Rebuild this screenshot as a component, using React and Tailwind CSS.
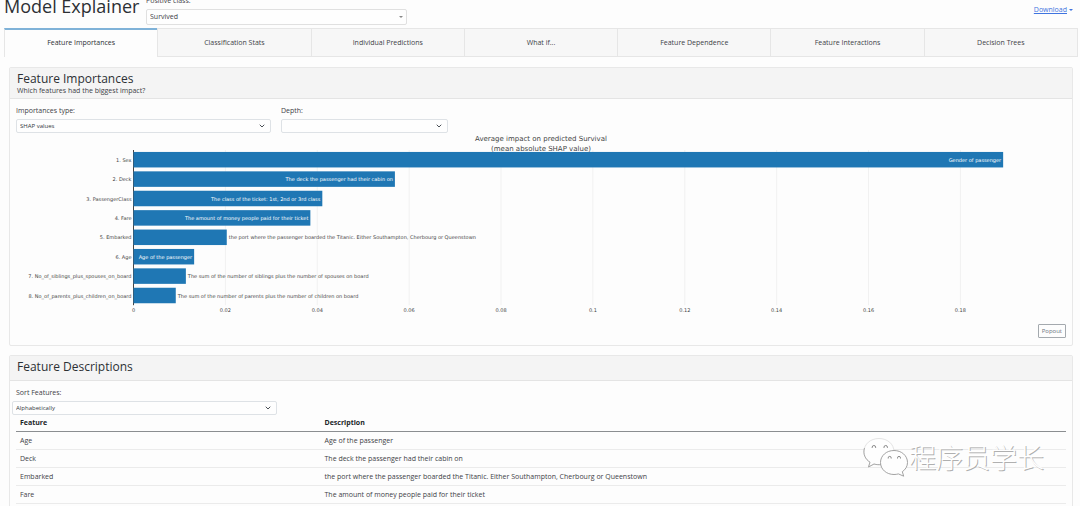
import React, { useState } from "react";
import { ChevronDown } from "lucide-react";

const TABS = [
  "Feature Importances",
  "Classification Stats",
  "Individual Predictions",
  "What if...",
  "Feature Dependence",
  "Feature Interactions",
  "Decision Trees",
];

const IMPORTANCES = [
  { name: "Sex", value: 0.1893, text: "Gender of passenger", inside: true },
  { name: "Deck", value: 0.0569, text: "The deck the passenger had their cabin on", inside: true },
  { name: "PassengerClass", value: 0.0411, text: "The class of the ticket: 1st, 2nd or 3rd class", inside: true },
  { name: "Fare", value: 0.0385, text: "The amount of money people paid for their ticket", inside: true },
  {
    name: "Embarked",
    value: 0.0203,
    text: "the port where the passenger boarded the Titanic. Either Southampton, Cherbourg or Queenstown",
  },
  { name: "Age", value: 0.0132, text: "Age of the passenger", inside: true },
  {
    name: "No_of_siblings_plus_spouses_on_board",
    value: 0.0114,
    text: "The sum of the number of siblings plus the number of spouses on board",
  },
  {
    name: "No_of_parents_plus_children_on_board",
    value: 0.0092,
    text: "The sum of the number of parents plus the number of children on board",
  },
];

const DESCRIPTIONS = [
  ["Age", "Age of the passenger"],
  ["Deck", "The deck the passenger had their cabin on"],
  ["Embarked", "the port where the passenger boarded the Titanic. Either Southampton, Cherbourg or Queenstown"],
  ["Fare", "The amount of money people paid for their ticket"],
];

const TICKS = [0, 0.02, 0.04, 0.06, 0.08, 0.1, 0.12, 0.14, 0.16, 0.18];

// plot geometry, in viewBox units
const LEFT = 117.5;
const TOP = 17;
const ROW = 19.4;
const BAR = 15.5;
const SCALE = 4594;
const BOTTOM = TOP + ROW * IMPORTANCES.length;

const SelectBox = ({ id, options, className }) => (
  <div className={`relative ${className}`}>
    <select
      id={id}
      className="block h-[14px] w-full appearance-none rounded-xs border border-[#dee2e6] bg-[#fefefe] px-[3px] text-[6px] leading-3 text-[#33383d]"
    >
      {options.map((o) => (
        <option key={o}>{o}</option>
      ))}
    </select>
    <ChevronDown className="pointer-events-none absolute top-[3px] right-[5px] h-2 w-2 text-[#4a5056]" strokeWidth={3} />
  </div>
);

const Card = ({ title, subtitle, children }) => (
  <section className="rounded-xs border border-[#e8e8e8]">
    <header className={`border-b border-[#e4e4e4] bg-[#f4f4f4] px-[7px] pt-[3px] ${subtitle ? "pb-[3px]" : "pb-[6px]"}`}>
      <h2 className="text-[12px] leading-[15px] text-[#2c3034]">{title}</h2>
      {subtitle && <p className="text-[7px] leading-[9px] text-[#3d4247]">{subtitle}</p>}
    </header>
    {children}
  </section>
);

const ImportanceChart = () => (
  <svg viewBox="0 0 1050 186" className="block w-full" fontFamily="'DejaVu Sans', Verdana, sans-serif" role="img" aria-label="Average impact on predicted Survival">
    {TICKS.map((t) => (
      <g key={t}>
        <line
          x1={LEFT + t * SCALE}
          x2={LEFT + t * SCALE}
          y1={TOP}
          y2={BOTTOM}
          stroke={t === 0 ? "#444" : "#f1f1f1"}
          strokeWidth={1}
        />
        <text x={LEFT + t * SCALE} y={BOTTOM + 7} fontSize={5} textAnchor="middle" fill="#444">
          {t}
        </text>
      </g>
    ))}
    {IMPORTANCES.map((f, i) => {
      const mid = TOP + ROW * (i + 0.5);
      const end = LEFT + f.value * SCALE;
      return (
        <g key={f.name} fontSize={5}>
          <rect x={LEFT} y={mid - BAR / 2} width={f.value * SCALE} height={BAR} fill="#1f77b4" />
          <text x={LEFT - 2} y={mid + 2} textAnchor="end" fill="#444">
            {`${i + 1}. ${f.name}`}
          </text>
          <text
            x={f.inside ? end - 2 : end + 2}
            y={mid + 2}
            textAnchor={f.inside ? "end" : "start"}
            fill={f.inside ? "#fff" : "#444"}
          >
            {f.text}
          </text>
        </g>
      );
    })}
    <g fontSize={7} textAnchor="middle" fill="#444">
      <text x={525} y={8}>Average impact on predicted Survival</text>
      <text x={525} y={17.5}>(mean absolute SHAP value)</text>
    </g>
  </svg>
);

const Watermark = () => (
  <div className="pointer-events-none absolute top-[437px] right-[36px] flex items-center">
    <svg viewBox="0 0 46 40" className="h-10 w-[46px]" fill="#fefefe" strokeLinejoin="round">
      <path
        d="M16 1.5C7.600 1.500 1 7 1 14.500c0 4.500 2.200 8.200 6 10.700L5.500 30l5.500-3c1.600.5 3.200.7 5 .7 8.300 0 15-5.500 15-13C31 7 24.300 1.500 16 1.500Z"
        stroke="#dcdcdc"
        strokeWidth="0.8"
      />
      <path d="M1.500 11C-.5 17 2.500 22.500 7 25.200L5.500 30l5.500-3c2.500.8 5 .8 7.500.5" fill="none" stroke="#999" strokeWidth="0.8" />
      <path
        d="M31 13.500c-7.600 0-13.500 5.200-13.500 12S23.400 37.500 31 37.500c1.600 0 3-.2 4.400-.6l5.300 2.300-1.400-4.500c3.300-2.200 5.200-5.400 5.200-9.200 0-6.800-5.900-12-13.500-12Z"
        stroke="#999"
        strokeWidth="0.9"
      />
      <g fill="none" stroke="#888" strokeWidth="1">
        <path d="M9.200 11v-.8a1.700 1.700 0 0 1 3.400 0v.8M21 11v-.8a1.700 1.700 0 0 1 3.400 0v.8" />
        <path d="M25.200 21.500v-.6a1.500 1.500 0 0 1 3 0v.6M34.500 21.500v-.6a1.500 1.500 0 0 1 3 0v.6" />
      </g>
    </svg>
    <span className="font-['Noto_Sans_CJK_SC',sans-serif] text-[27px] leading-10 font-light text-white [text-shadow:1px_1px_0_#b0b0b0]">
      程序员学长
    </span>
  </div>
);

export default function App() {
  const [active, setActive] = useState(TABS[0]);

  return (
    <div className="relative h-screen overflow-hidden bg-[#fdfdfd] font-['Open_Sans','Noto_Sans',sans-serif] text-[7px] text-[#3d4247]">
      <div className="-mt-[6px] flex items-start pr-[7px] pl-1">
        <h1 className="w-[142px] text-[18px] leading-6 whitespace-nowrap text-[#2c3034]">Model Explainer</h1>
        <div className="w-[261px]">
          <label htmlFor="positive-class" className="block pt-[2px] leading-[10px]">
            Positive class:
          </label>
          <div className="relative mt-[3px]">
            <select
              id="positive-class"
              className="block h-4 w-full appearance-none rounded-xs border border-[#e0e0e0] bg-[#fefefe] px-[3px] text-[7px] leading-3"
            >
              <option>Survived</option>
              <option>Not survived</option>
            </select>
            <svg viewBox="0 0 4 2" className="pointer-events-none absolute top-[7px] right-1 h-[2px] w-1" fill="#888">
              <path d="M0 0h4L2 2Z" />
            </svg>
          </div>
        </div>
        <a href="#download" className="mt-[11px] ml-auto flex items-center gap-[2px] leading-[10px] text-[#3f74e0]">
          <span className="underline">Download</span>
          <svg viewBox="0 0 4 2" className="h-[2px] w-1" fill="currentColor">
            <path d="M0 0h4L2 2Z" />
          </svg>
        </a>
      </div>

      <nav className="mt-[3px] mr-[2px] ml-1 flex h-[29px] border-r border-[#e6e6e6]" role="tablist">
        {TABS.map((tab) => (
          <button
            key={tab}
            role="tab"
            aria-selected={active === tab}
            onClick={() => setActive(tab)}
            className={
              active === tab
                ? "flex-1 border-t-2 border-l border-t-[#7fb2d8] border-l-[#e6e6e6] bg-[#fdfdfd] text-[#2c3034]"
                : "flex-1 border-t border-b border-l border-[#e6e6e6] bg-[#f7f7f7] pt-[2px]"
            }
          >
            {tab}
          </button>
        ))}
      </nav>

      <main className="flex flex-col gap-[9px] pt-[10px] pr-[7px] pl-[9px]">
        <Card title="Feature Importances" subtitle="Which features had the biggest impact?">
          <div className="px-[6px] pt-[7px] pb-[7px]">
            <div className="flex gap-[10px]">
              <div className="w-[255px]">
                <label htmlFor="importance-type" className="mb-[3px] block leading-[10px]">
                  Importances type:
                </label>
                <SelectBox id="importance-type" options={["SHAP values", "Permutation Importances"]} className="w-full" />
              </div>
              <div className="w-[167px]">
                <label htmlFor="depth" className="mb-[3px] block leading-[10px]">
                  Depth:
                </label>
                <SelectBox id="depth" options={["", "1", "2", "3", "4", "5", "6", "7", "8"]} className="w-full" />
              </div>
            </div>
            <ImportanceChart />
            <div className="mt-[5px] flex justify-end">
              <button className="h-[14px] rounded-[1px] border border-[#a4a9ae] px-[3px] text-[6px] leading-3 text-[#6c757d]">
                Popout
              </button>
            </div>
          </div>
        </Card>

        <Card title="Feature Descriptions">
          <div className="px-[6px] pt-[7px] pb-10">
            <label htmlFor="sort-features" className="mb-[3px] block leading-[10px]">
              Sort Features:
            </label>
            <SelectBox id="sort-features" options={["Alphabetically", "Importance"]} className="-ml-1 w-[265px]" />
            <table className="w-full text-left leading-[17px]">
              <thead>
                <tr className="border-b border-[#8b8e91] text-[#212529] leading-4">
                  <th className="w-[29%] px-1 font-bold">Feature</th>
                  <th className="px-1 font-bold">Description</th>
                </tr>
              </thead>
              <tbody>
                {DESCRIPTIONS.map(([name, text]) => (
                  <tr key={name} className="border-b border-[#ebebeb]">
                    <td className="px-1">{name}</td>
                    <td className="px-1">{text}</td>
                  </tr>
                ))}
              </tbody>
            </table>
          </div>
        </Card>
      </main>

      <Watermark />
    </div>
  );
}
